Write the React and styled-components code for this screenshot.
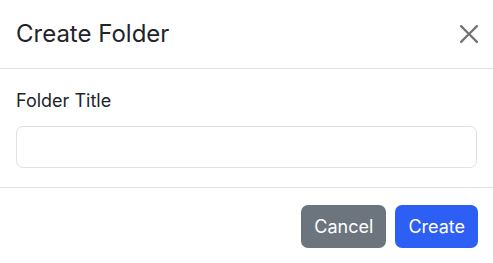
import React from "react";
import styled, { createGlobalStyle } from "styled-components";

const Global = createGlobalStyle`
  html, body { margin: 0; padding: 0; background: #fff; }
  body { font-family: Inter, "Noto Sans", sans-serif; color: #212529; }
  * { box-sizing: border-box; }
`;

const Modal = styled.div`
  width: 493px;
  background: #fff;
  display: flex;
  flex-direction: column;
`;

const Header = styled.div`
  display: flex;
  align-items: center;
  justify-content: space-between;
  padding: 16px 15px 16px 16px;
  border-bottom: 1px solid #dee2e6;
`;

const Title = styled.h5`
  margin: 0;
  font-size: 24px;
  font-weight: 400;
  line-height: 36px;
  color: #212529;
`;

const CloseButton = styled.button`
  border: 0;
  background: transparent;
  padding: 0;
  width: 19px;
  height: 19px;
  display: flex;
  align-items: center;
  justify-content: center;
  opacity: 0.55;
  cursor: pointer;
`;

const Body = styled.div`
  padding: 18px 16px 19px 16px;
  border-bottom: 1px solid #dee2e6;
`;

const Label = styled.label`
  display: block;
  font-size: 18px;
  line-height: 27px;
  margin-bottom: 12px;
  color: #212529;
`;

const Input = styled.input`
  display: block;
  width: 461px;
  height: 42px;
  border: 1px solid #dee2e6;
  border-radius: 7px;
  padding: 6px 13px;
  font-family: inherit;
  font-size: 18px;
  outline: none;
`;

const Footer = styled.div`
  display: flex;
  justify-content: flex-end;
  gap: 9px;
  padding: 17px 15px 15px 16px;
`;

const Button = styled.button`
  height: 43px;
  padding: 0 13px;
  border: 0;
  border-radius: 7px;
  font-family: inherit;
  font-size: 18px;
  line-height: 27px;
  color: #fff;
  background: ${(p) => (p.$variant === "primary" ? "#2d5ff5" : "#6c757d")};
  cursor: pointer;
`;

export default function App() {
  return (
    <>
      <Global />
      <Modal>
        <Header>
          <Title>Create Folder</Title>
          <CloseButton aria-label="Close">
            <svg width="18" height="18" viewBox="0 0 16 16" fill="#000">
              <path d="M.293.293a1 1 0 0 1 1.414 0L8 6.586 14.293.293a1 1 0 1 1 1.414 1.414L9.414 8l6.293 6.293a1 1 0 0 1-1.414 1.414L8 9.414l-6.293 6.293a1 1 0 0 1-1.414-1.414L6.586 8 .293 1.707a1 1 0 0 1 0-1.414z" />
            </svg>
          </CloseButton>
        </Header>
        <Body>
          <Label htmlFor="title">Folder Title</Label>
          <Input id="title" type="text" />
        </Body>
        <Footer>
          <Button>Cancel</Button>
          <Button $variant="primary">Create</Button>
        </Footer>
      </Modal>
    </>
  );
}
